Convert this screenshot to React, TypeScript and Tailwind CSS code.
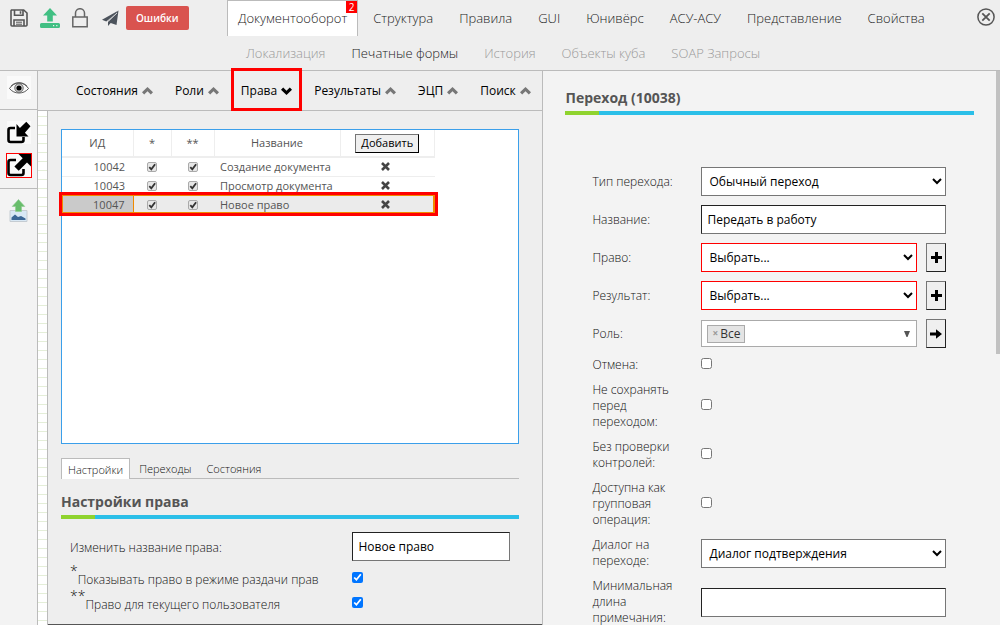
import React, { useState } from 'react';

const MAIN_TABS = ['Документооборот', 'Структура', 'Правила', 'GUI', 'Юнивёрс', 'АСУ-АСУ', 'Представление', 'Свойства'];

const SUB_TABS = [
    { label: 'Локализация', enabled: false },
    { label: 'Печатные формы', enabled: true },
    { label: 'История', enabled: false },
    { label: 'Объекты куба', enabled: false },
    { label: 'SOAP Запросы', enabled: false },
];

const SECTIONS = ['Состояния', 'Роли', 'Права', 'Результаты', 'ЭЦП', 'Поиск'];

const RIGHTS = [
    { id: 10042, name: 'Создание документа' },
    { id: 10043, name: 'Просмотр документа' },
    { id: 10047, name: 'Новое право' },
];

const SaveIcon = () => (
    <svg width="18" height="18" viewBox="0 0 18 18" fill="none" stroke="#555" strokeWidth="1.6">
        <path d="M1.500 1h12.200l3.300 3v12.200a1 1 0 0 1-1 .8H2a1 1 0 0 1-1-1V1.800z" />
        <path d="M4.500 1v5.200h8.500V1M10.500 2.200v2.600" />
        <path d="M4 17v-6h10v6" />
        <path d="M6 13.200h6M6 15.200h6" strokeWidth="1" />
    </svg>
);

const UploadIcon = () => (
    <svg width="20" height="21" viewBox="0 0 20 21" fill="#41bf83">
        <path d="M10 0l7 7.500h-4.200v6H7.200v-6H3z" />
        <path fillRule="evenodd" d="M1.500 15h17a1.500 1.500 0 0 1 1.500 1.500v2a1.500 1.500 0 0 1-1.500 1.500h-17A1.500 1.500 0 0 1 0 18.500v-2A1.500 1.500 0 0 1 1.500 15zM13 17v1.200h1.200V17zm3.200 0v1.200h1.200V17z" />
    </svg>
);

const LockIcon = () => (
    <svg width="16" height="20" viewBox="0 0 16 20" fill="none" stroke="#666" strokeWidth="1.500">
        <path d="M.8 9h14.400v9.800H.8z" />
        <path d="M3.500 9V5a4.500 4.300 0 0 1 9 0v4" />
    </svg>
);

const PlaneIcon = () => (
    <svg width="17" height="17" viewBox="0 0 17 17" fill="#4c535c">
        <path d="M16.500.5L0 9.800l4.300 1.600L14 3.500z" />
        <path d="M16.500.5L6 11.200V16l2.700-3 5.800 2z" />
        <path d="M15 3L6.200 11.500" stroke="#eee" strokeWidth=".8" />
    </svg>
);

const CloseIcon = () => (
    <svg width="18" height="18" viewBox="0 0 18 18" fill="none" stroke="#555" strokeWidth="1.500">
        <circle cx="9" cy="9" r="8.100" />
        <path d="M5.300 5.300l7.400 7.400M12.700 5.300l-7.400 7.400" strokeWidth="1.800" />
    </svg>
);

const EyeIcon = () => (
    <svg width="20" height="12" viewBox="0 0 20 12" fill="none" stroke="#444">
        <path d="M.5 6.500C5-.8 15-.8 19.500 6.500 15 12.500 5 12.500.5 6.500z" strokeWidth=".9" />
        <path d="M2 4C6-.5 14-.5 18 4" strokeWidth=".7" />
        <circle cx="10" cy="6" r="4.200" fill="#ddd" strokeWidth=".8" />
        <circle cx="10" cy="6" r="2.600" fill="#000" stroke="none" />
    </svg>
);

const ArrowInIcon = () => (
    <svg width="24" height="23" viewBox="0 0 24 23">
        <path d="M8 7H3.500A2 2 0 0 0 1.500 9v10a2 2 0 0 0 2 2h11a2 2 0 0 0 2-2v-3" fill="none" stroke="#000" strokeWidth="2.600" />
        <path d="M9.500 3v12.500h12l-3.600-3.700L23.500 5.200 19.300.8l-6.400 6.100z" fill="#000" />
    </svg>
);

const ArrowOutIcon = () => (
    <svg width="24" height="23" viewBox="0 0 24 23">
        <path d="M9 6H3.500A2 2 0 0 0 1.500 8v11a2 2 0 0 0 2 2h11a2 2 0 0 0 2-2v-4" fill="none" stroke="#000" strokeWidth="2.600" />
        <path d="M11.500 0H24v12.500l-4-4-8.300 8.300-4.300-4.300L15.700 4.200z" fill="#000" />
    </svg>
);

const ImageUploadIcon = () => (
    <svg width="19" height="24" viewBox="0 0 19 24">
        <path d="M1 11.500h17v11H1z" fill="#d8e8f5" stroke="#c5ccd2" />
        <path d="M2.500 21v-2.500l3.500-3 3 2.500 3-1 4.500 2.500V21z" fill="#3c6796" />
        <path d="M9.500.5l6.300 7H12.500v5h-6v-5H3.200z" fill="#68bd6b" stroke="#8fcb90" strokeWidth=".6" />
    </svg>
);

const Chevron: React.FC<{ down?: boolean }> = ({ down }) => (
    <svg width="11" height="8" viewBox="0 0 11 8" fill={down ? '#000' : '#777'}>
        {down
            ? <path d="M0 2.700L2.200.5l3.300 3.200L8.800.5 11 2.700 5.500 8z" />
            : <path d="M0 5.300L5.500 0 11 5.300 8.800 7.500 5.500 4.300 2.200 7.500z" />}
    </svg>
);

const CrossIcon = () => (
    <svg width="9" height="9" viewBox="0 0 9 9" stroke="#444" strokeWidth="2.600">
        <path d="M1 1l7 7M8 1L1 8" />
    </svg>
);

const PlusIcon = () => (
    <svg width="11" height="11" viewBox="0 0 11 11" fill="#000">
        <path d="M4 0h3v4h4v3H7v4H4V7H0V4h4z" />
    </svg>
);

const ArrowRightIcon = () => (
    <svg width="12" height="10" viewBox="0 0 12 10" fill="#000">
        <path d="M0 3.500h6V.3L12 5 6 9.700V6.500H0z" />
    </svg>
);

const SectionTitle: React.FC<{ children: React.ReactNode }> = ({ children }) => (
    <div>
        <h2 className="text-sm leading-5 font-bold text-[#555]">{children}</h2>
        <div className="mt-[3px] h-1 bg-[#2bbfe8]">
            <div className="h-full w-[34px] bg-[#8fd32e]" />
        </div>
    </div>
);

const GridCheckbox: React.FC<{ label: string }> = ({ label }) => (
    <span className="relative mx-auto block size-[10px]">
        <input type="checkbox" aria-label={label} defaultChecked className="peer block size-full appearance-none rounded-[2px] border border-[#aaa] bg-[#e6e6e6]" />
        <svg className="pointer-events-none absolute inset-0 hidden peer-checked:block" viewBox="0 0 10 10" fill="none" stroke="#333" strokeWidth="1.800">
            <path d="M2.300 5.200l2 2.200 3.800-5.200" />
        </svg>
    </span>
);

const RightsTable = () => (
    <div className="h-[315px] border border-[#3b9fea] bg-white">
        <table className="w-[373px] table-fixed border-collapse text-[11px] leading-4 text-[#555]">
            <colgroup>
                <col className="w-[71px]" />
                <col className="w-[38px]" />
                <col className="w-[43px]" />
                <col className="w-[126px]" />
                <col />
            </colgroup>
            <thead>
                <tr className="h-[27px] border-b-2 border-[#eee]">
                    <th className="border-r border-[#eee] font-normal">ИД</th>
                    <th className="border-r border-[#eee] font-normal">*</th>
                    <th className="border-r border-[#eee] font-normal">**</th>
                    <th className="border-r border-[#eee] font-normal">Название</th>
                    <th className="border-r border-[#eee] font-normal">
                        <button className="h-[19px] border border-t-[#767676] border-r-black border-b-black border-l-[#767676] bg-[#efefef] px-[5px] leading-4 text-black">Добавить</button>
                    </th>
                </tr>
            </thead>
            <tbody>
                {RIGHTS.map(({ id, name }) => {
                    const selected = id === 10047;
                    return (
                        <tr key={id} className={`relative h-[19px] border-b border-[#eee] ${selected ? 'bg-[#ebebeb]' : ''}`}>
                            <td className={`pr-2 text-right ${selected ? 'border-r border-[#f08a00] bg-[#cacaca]' : ''}`}>
                                {id}
                                {selected && (
                                    <span className="pointer-events-none absolute -inset-[3px] border-3 border-[#f00]">
                                        <span className="absolute inset-0 border border-r-2 border-[#f08a00]" />
                                    </span>
                                )}
                            </td>
                            <td><GridCheckbox label={`* ${name}`} /></td>
                            <td><GridCheckbox label={`** ${name}`} /></td>
                            <td className="pl-1.5 whitespace-nowrap">{name}</td>
                            <td>
                                <button aria-label="Удалить" className="ml-[41px] flex"><CrossIcon /></button>
                            </td>
                        </tr>
                    );
                })}
            </tbody>
        </table>
    </div>
);

const inputClass = 'h-[29px] w-full border border-t-[#222] border-r-[#767676] border-b-[#767676] border-l-[#222] bg-white px-[5px] text-xs text-black';
const iconButtonClass = 'ml-[9px] flex h-[29px] w-5 shrink-0 items-center justify-center border border-t-[#767676] border-r-[#222] border-b-[#222] border-l-[#767676] bg-[#efefef]';

const FormRow: React.FC<{ label: string, htmlFor: string, children: React.ReactNode }> = ({ label, htmlFor, children }) => (
    <div className="flex items-center">
        <label htmlFor={htmlFor} className="w-[85px] shrink-0 text-xs leading-4 font-light text-[#111]">{label}</label>
        <div className="ml-6 flex min-w-0 flex-1 items-center">{children}</div>
    </div>
);

const SelectField: React.FC<{ id: string, value: string, invalid?: boolean }> = ({ id, value, invalid }) => (
    <select id={id} className={`h-[29px] w-full min-w-0 border bg-white px-[3px] text-xs text-black ${invalid ? 'border-[#f00]' : 'border-[#767676]'}`}>
        <option>{value}</option>
    </select>
);

const CheckRow: React.FC<{ label: string, id: string }> = ({ label, id }) => (
    <FormRow label={label} htmlFor={id}>
        <input id={id} type="checkbox" className="mb-[3px] size-[11px]" />
    </FormRow>
);

const Header = () => {
    const [active, setActive] = useState(MAIN_TABS[0]);

    return (
        <header className="flex h-[71px] shrink-0 items-start border-b border-[#bbb]">
            <div className="flex w-[227px] shrink-0 items-center gap-3 pt-1.5 pl-2.5">
                <button aria-label="Сохранить"><SaveIcon /></button>
                <button aria-label="Загрузить"><UploadIcon /></button>
                <button aria-label="Заблокировать"><LockIcon /></button>
                <button aria-label="Отправить" className="ml-0.5"><PlaneIcon /></button>
                <button className="-ml-[5px] h-6 rounded-[2px] bg-[#d9534f] px-[10px] text-[10px] font-semibold text-white">Ошибки</button>
            </div>
            <nav className="min-w-0 flex-1 whitespace-nowrap">
                <div className="flex gap-1">
                    {MAIN_TABS.map(tab => (
                        <button
                            key={tab}
                            onClick={() => setActive(tab)}
                            className={`relative h-9 border border-b-0 px-2.5 text-[13px] font-light text-[#222] ${tab === active ? 'border-[#bbb] bg-white' : 'border-transparent'}`}
                        >
                            {tab}
                            {tab === MAIN_TABS[0] && <span className="absolute top-0 right-0 h-3 w-[11px] bg-[#f00] text-center text-[10px] leading-3 font-normal text-white">2</span>}
                        </button>
                    ))}
                </div>
                <div className="flex gap-1 pl-2">
                    {SUB_TABS.map(({ label, enabled }) => (
                        <button key={label} disabled={!enabled} className="h-[35px] border border-transparent px-2.5 text-[13px] font-light text-[#222] disabled:text-[#999]">{label}</button>
                    ))}
                </div>
            </nav>
            <button aria-label="Закрыть" className="mt-2 mr-[5px]"><CloseIcon /></button>
        </header>
    );
};

const Sidebar = () => (
    <aside className="flex w-[38px] shrink-0 flex-col border-r border-[#bbb] bg-[#f3f3f3]">
        <div className="h-[39px] border-b border-[#bbb] pt-[5px] pl-[7px]">
            <button aria-label="Просмотр" className="flex h-[23px] w-6 items-center justify-center bg-[#fafafa]"><EyeIcon /></button>
        </div>
        <div className="flex h-[79px] flex-col gap-[9px] border-b border-[#bbb] pt-[11px] pl-1.5">
            <button aria-label="Импорт" className="ml-px w-6 bg-[#fafafa]"><ArrowInIcon /></button>
            <button aria-label="Экспорт" className="w-[26px] border border-[#f00] bg-[#fafafa]"><ArrowOutIcon /></button>
        </div>
        <button aria-label="Загрузить изображение" className="mt-2.5 ml-[9px] self-start"><ImageUploadIcon /></button>
    </aside>
);

const RightsPanel = () => (
    <section className="flex min-w-0 grow-[505] basis-0 flex-col border-r border-[#bbb]">
        <nav className="flex h-10 shrink-0 items-center gap-[22px] border-b border-[#bbb] pl-[38px] text-xs whitespace-nowrap text-black">
            {SECTIONS.map(section => (
                <button key={section} className="relative flex items-center gap-1">
                    {section}
                    <Chevron down={section === 'Права'} />
                    {section === 'Права' && <span className="pointer-events-none absolute -inset-x-[10px] -top-[15px] -bottom-3 border-3 border-[#f00]" />}
                </button>
            ))}
        </nav>
        <div className="flex min-h-0 flex-1">
            <div className="w-[10px] shrink-0 border-r border-[#bbb] bg-white bg-[linear-gradient(#e4eed8_1px,transparent_1px)] bg-[length:9px_9px] bg-[position:0_5px]" />
            <div className="flex min-w-0 flex-1 flex-col border-b border-[#555] pt-[18px] pr-[23px] pl-[13px] text-[#111]">
                <RightsTable />
                <div className="mt-3.5 mb-[13px] flex h-[21px] items-stretch border-b border-[#bbb] text-[11px] font-light">
                    <button className="-mb-px border border-b-0 border-[#bbb] bg-white px-1.5 pt-0.5">Настройки</button>
                    <button className="ml-[9px] pt-[3px]">Переходы</button>
                    <button className="ml-[15px] pt-[3px]">Состояния</button>
                </div>
                <SectionTitle>Настройки права</SectionTitle>
                <div className="mt-[13px] grid grid-cols-[1fr_158px] items-center px-[9px] text-xs font-light">
                    <label htmlFor="right-name" className="pt-0.5">Изменить название права:</label>
                    <input id="right-name" defaultValue="Новое право" className={`${inputClass} font-normal`} />
                    <label htmlFor="show-right" className="flex h-[25px] items-end leading-3"><span className="self-start text-sm leading-5">*</span>Показывать право в режиме раздачи прав</label>
                    <input id="show-right" type="checkbox" defaultChecked className="mt-2 size-[11px]" />
                    <label htmlFor="current-user" className="flex h-[25px] items-end leading-3"><span className="self-start text-sm leading-5">**</span>Право для текущего пользователя</label>
                    <input id="current-user" type="checkbox" defaultChecked className="mt-2 size-[11px]" />
                </div>
            </div>
        </div>
    </section>
);

const TransitionPanel = () => (
    <section className="flex min-w-0 grow-[457] basis-0 overflow-hidden bg-[#f3f3f3]">
        <div className="min-w-0 flex-1 pt-[17px] pr-[22px] pl-[22px]">
            <SectionTitle>Переход (10038)</SectionTitle>
            <form className="mt-[52px] flex flex-col gap-[9px] pr-7 pl-[27px]">
                <FormRow label="Тип перехода:" htmlFor="type"><SelectField id="type" value="Обычный переход" /></FormRow>
                <FormRow label="Название:" htmlFor="name"><input id="name" defaultValue="Передать в работу" className={inputClass} /></FormRow>
                <FormRow label="Право:" htmlFor="right">
                    <SelectField id="right" value="Выбрать..." invalid />
                    <button type="button" aria-label="Добавить право" className={iconButtonClass}><PlusIcon /></button>
                </FormRow>
                <FormRow label="Результат:" htmlFor="result">
                    <SelectField id="result" value="Выбрать..." invalid />
                    <button type="button" aria-label="Добавить результат" className={iconButtonClass}><PlusIcon /></button>
                </FormRow>
                <FormRow label="Роль:" htmlFor="role">
                    <div className="flex h-[27px] min-w-0 flex-1 items-center border border-[#aaa] bg-white pr-1.5 pl-[5px] text-xs text-[#333]">
                        <span className="flex h-[18px] items-center border border-[#aaa] bg-[#e4e4e4] px-1">
                            <button type="button" aria-label="Убрать Все" className="mr-0.5 text-[10px] font-bold text-[#999]">×</button>Все
                        </span>
                        <input id="role" className="min-w-0 flex-1 outline-none" />
                        <svg width="6" height="6" viewBox="0 0 6 6" fill="#555"><path d="M0 0h6L3.500 6h-1z" /></svg>
                    </div>
                    <button type="button" aria-label="Перейти к роли" className={iconButtonClass}><ArrowRightIcon /></button>
                </FormRow>
                <CheckRow label="Отмена:" id="cancel" />
                <CheckRow label="Не сохранять перед переходом:" id="no-save" />
                <CheckRow label="Без проверки контролей:" id="no-check" />
                <CheckRow label="Доступна как групповая операция:" id="group" />
                <FormRow label="Диалог на переходе:" htmlFor="dialog"><SelectField id="dialog" value="Диалог подтверждения" /></FormRow>
                <FormRow label="Минимальная длина примечания:" htmlFor="min-length"><input id="min-length" className={inputClass} /></FormRow>
            </form>
        </div>
        <div className="w-1 shrink-0">
            <div className="h-[51%] bg-[#c1c1c1]" />
        </div>
    </section>
);

export default function App() {
    return (
        <div className="flex h-screen flex-col overflow-hidden bg-[#eee] font-['Open_Sans',sans-serif]">
            <Header />
            <main className="flex min-h-0 flex-1">
                <Sidebar />
                <RightsPanel />
                <TransitionPanel />
            </main>
        </div>
    );
}
